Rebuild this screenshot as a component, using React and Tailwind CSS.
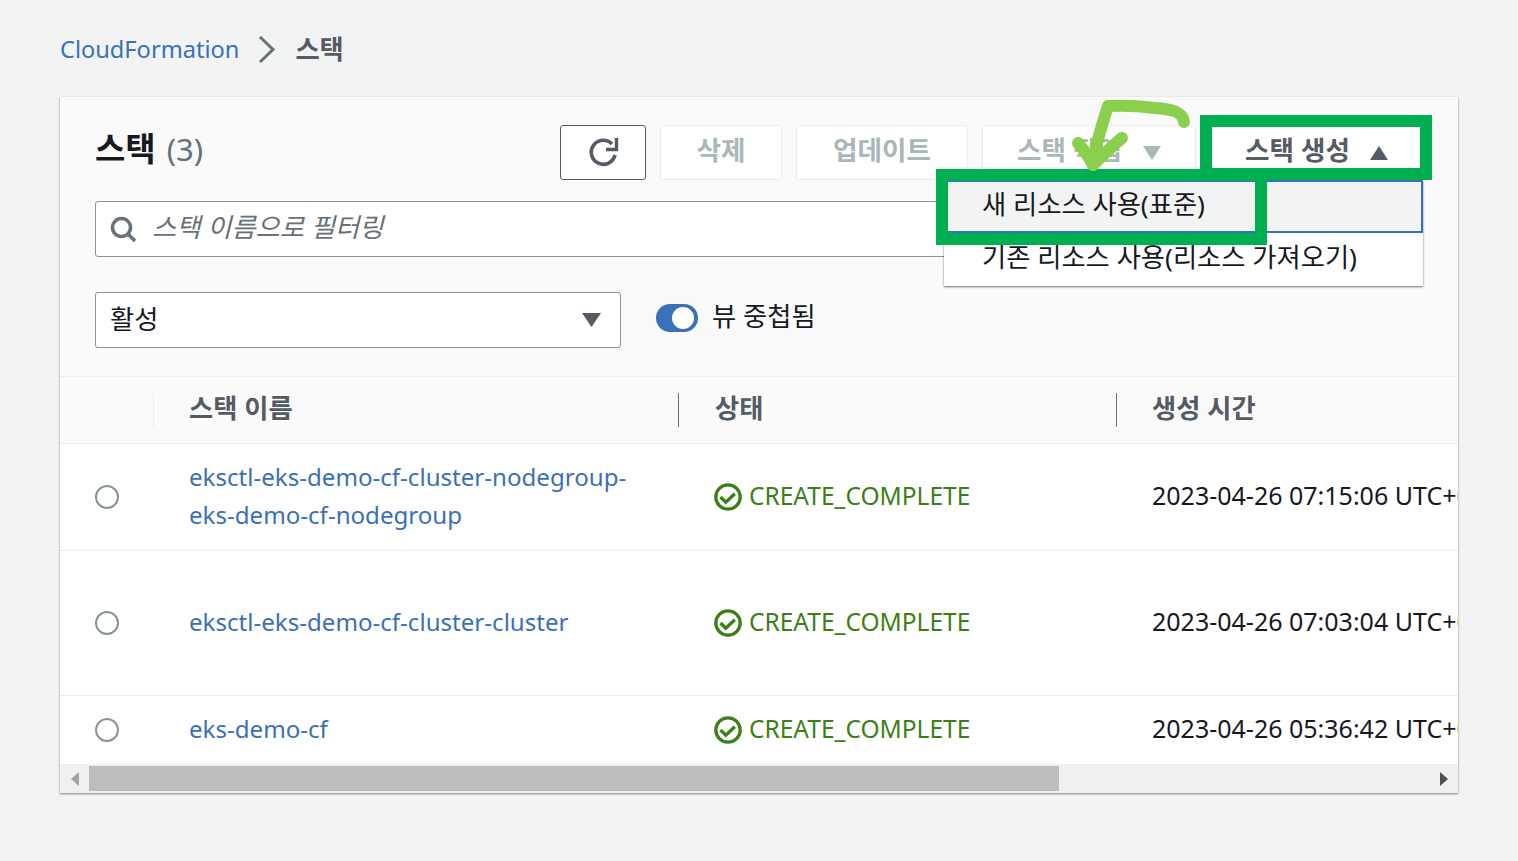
const FONT = "font-['Noto_Sans','Noto_Sans_CJK_KR',sans-serif]";

function Check() {
  return (
    <svg width="28" height="28" viewBox="0 0 28 28" fill="none" className="shrink-0">
      <circle cx="14" cy="14" r="12.200" stroke="#3b7f16" strokeWidth="3.300" />
      <path d="M6.500 14l5.300 5.200 9-8.500" stroke="#3b7f16" strokeWidth="3.400" />
    </svg>
  );
}

function Row({ h, name, date, border = true }) {
  return (
    <div className={`grid grid-cols-[129px_526px_437px_1fr] items-center ${h} ${border ? "border-b border-[#eaeded]" : ""}`}>
      <div className="pl-[35px]">
        <div className="w-6 h-6 rounded-full border-2 border-[#879596] bg-white" />
      </div>
      <div className="text-[#3a70b7] text-[24.1px] leading-[38px] whitespace-pre-line -mt-[2px]">{name}</div>
      <div className="flex items-center gap-[7px] text-[#3b7f16] text-[24.5px] -ml-[1px]">
        <Check />
        <span className="-mt-[2px]">CREATE_COMPLETE</span>
      </div>
      <div className="text-[#16191f] text-[25px] whitespace-nowrap -mt-[2px]">{date}</div>
    </div>
  );
}

function Btn({ w, children, className = "" }) {
  return (
    <div className={`${w} h-[55px] flex items-center justify-center rounded-[3px] border font-bold text-[26.6px] ${className}`}>
      <div className="flex items-center -mt-[3px]">{children}</div>
    </div>
  );
}

export default function App() {
  return (
    <div className={`${FONT} relative w-[1518px] h-[861px] bg-[#f2f3f3] overflow-hidden text-[26.3px] text-[#16191f] px-[60px] pt-[28px]`}>
      <div className="flex items-center h-[42px] gap-[18px] mb-[27px]">
        <span className="text-[#3a70b7] text-[23.6px] mt-[2px]">CloudFormation</span>
        <svg width="20" height="30" viewBox="0 0 20 30" fill="none">
          <path d="M3 3l13 12.500L3 28" stroke="#687078" strokeWidth="3" />
        </svg>
        <span className="text-[#545b64] font-bold mt-[1px]">스택</span>
      </div>

      <div className="w-[1398px] h-[696px] bg-white shadow-[0_1px_2px_rgba(0,28,36,0.5)] overflow-hidden flex flex-col">
        <div className="h-[280px] bg-[#fafafa] border-b border-[#eaeded] px-[35px] pt-[28px] shrink-0">
          <div className="flex items-center">
            <div className="flex items-baseline gap-[11px] -mt-[8px]">
              <span className="font-bold text-[33px] leading-[50px] text-[#16191f]">스택</span>
              <span className="text-[#687078] text-[31px] leading-[50px]">(3)</span>
            </div>
            <div className="ml-auto flex gap-[14px]">
              <Btn w="w-[86px]" className="border-[#545b64] bg-white">
                <svg width="32" height="32" viewBox="0 0 32 32" fill="none" className="mt-[1px]">
                  <path d="M25 8A12 12 0 1 0 28 19" stroke="#545b64" strokeWidth="3.600" />
                  <path d="M29.500 2v11.500H19" stroke="#545b64" strokeWidth="3.400" />
                </svg>
              </Btn>
              <Btn w="w-[122px]" className="border-[#eaeded] bg-white text-[#aab7b8]">삭제</Btn>
              <Btn w="w-[172px]" className="border-[#eaeded] bg-white text-[#aab7b8]">업데이트</Btn>
              <Btn w="w-[214px]" className="border-[#eaeded] bg-white text-[#aab7b8]">
                <span>스택 작업</span>
                <svg width="18" height="14" viewBox="0 0 18 14" className="ml-[21px] mt-[4px]"><path d="M0 0h18L9 14z" fill="#aab7b8" /></svg>
              </Btn>
              <Btn w="w-[213px]" className="border-white bg-white text-[#545b64]">
                <span>스택 생성</span>
                <svg width="18" height="14" viewBox="0 0 18 14" className="ml-[20px] mt-[4px]"><path d="M0 14h18L9 0z" fill="#545b64" /></svg>
              </Btn>
            </div>
          </div>

          <div className="mt-[21px] h-[56px] bg-white border border-[#879596] rounded-[3px] flex items-center pl-[14px] gap-[14px]">
            <svg width="28" height="28" viewBox="0 0 28 28" fill="none" className="shrink-0">
              <circle cx="11.500" cy="12.500" r="9" stroke="#687078" strokeWidth="3.500" />
              <path d="M18 19l7 7" stroke="#687078" strokeWidth="3.500" />
            </svg>
            <span className="italic text-[#687078] -mt-[3px]">스택 이름으로 필터링</span>
          </div>

          <div className="mt-[35px] flex items-center">
            <div className="w-[526px] h-[56px] bg-white border border-[#879596] rounded-[3px] flex items-center justify-between pl-[14px] pr-[19px]">
              <span className="-mt-[1px]">활성</span>
              <svg width="19" height="14" viewBox="0 0 19 14"><path d="M0 0h19L9.500 14z" fill="#545b64" /></svg>
            </div>
            <div className="ml-[35px] w-[42px] h-[28px] rounded-full bg-[#3a70b7] relative shrink-0 -mt-[4px]">
              <div className="absolute right-[4px] top-[3px] w-[22px] h-[22px] rounded-full bg-white" />
            </div>
            <span className="ml-[14px] -mt-[7px]">뷰 중첩됨</span>
          </div>
        </div>

        <div className="h-[67px] bg-[#fafafa] border-b border-[#eaeded] grid grid-cols-[93px_525px_438px_1fr] items-center font-bold text-[#545b64] shrink-0">
          <div />
          <div className="h-[34px] border-l border-[#eaeded] pl-[35px] flex items-center"><span className="-mt-[3px]">스택 이름</span></div>
          <div className="h-[34px] border-l border-[#687078] pl-[36px] flex items-center"><span className="-mt-[3px]">상태</span></div>
          <div className="h-[34px] border-l border-[#687078] pl-[35px] flex items-center"><span className="-mt-[3px]">생성 시간</span></div>
        </div>

        <Row h="h-[107px]" name={"eksctl-eks-demo-cf-cluster-nodegroup-\neks-demo-cf-nodegroup"} date="2023-04-26 07:15:06 UTC+09:00" />
        <Row h="h-[145px]" name="eksctl-eks-demo-cf-cluster-cluster" date="2023-04-26 07:03:04 UTC+09:00" />
        <Row h="h-[68px]" name="eks-demo-cf" date="2023-04-26 05:36:42 UTC+09:00" border={false} />

        <div className="h-[29px] bg-[#f0f0f0] flex items-start pt-[2px] shrink-0">
          <div className="w-[29px] h-[25px] flex items-center justify-center">
            <svg width="8" height="14" viewBox="0 0 8 14"><path d="M8 0v14L0 7z" fill="#a3a3a3" /></svg>
          </div>
          <div className="w-[970px] h-[25px] bg-[#bdbdbd]" />
          <div className="ml-auto w-[29px] h-[25px] flex items-center justify-center">
            <svg width="8" height="14" viewBox="0 0 8 14"><path d="M0 0v14l8-7z" fill="#505050" /></svg>
          </div>
        </div>
      </div>

      <div className="absolute left-[944px] top-[180px] w-[479px] h-[106px] bg-white shadow-[0_1px_2px_rgba(0,28,36,0.6)]">
        <div className="h-[53px] bg-[#f2f3f3] border-2 border-[#3a70b7] flex items-center pl-[36px]"><span className="-mt-[3px]">새 리소스 사용(표준)</span></div>
        <div className="h-[50px] flex items-center pl-[38px]"><span className="-mt-[1px]">기존 리소스 사용(리소스 가져오기)</span></div>
      </div>

      <div className="absolute left-[1200px] top-[115px] w-[232px] h-[65px] border-[12px] border-[#00b050]" />
      <div className="absolute left-[936px] top-[169px] w-[331px] h-[76px] border-[12px] border-[#00b050]" />

      <svg className="absolute left-0 top-0 pointer-events-none" width="1518" height="861" fill="none">
        <path d="M1184 122C1183 111 1170 109 1155 108 1140 106 1125 105 1108 106 1102 125 1095 145 1093 165" stroke="#8ccf4d" strokeWidth="12" strokeLinecap="round" strokeLinejoin="round" />
        <path d="M1078 143c6 7 11 14 15 22 9-9 18-18 29-27" stroke="#8ccf4d" strokeWidth="12" strokeLinecap="round" strokeLinejoin="round" />
      </svg>
    </div>
  );
}
